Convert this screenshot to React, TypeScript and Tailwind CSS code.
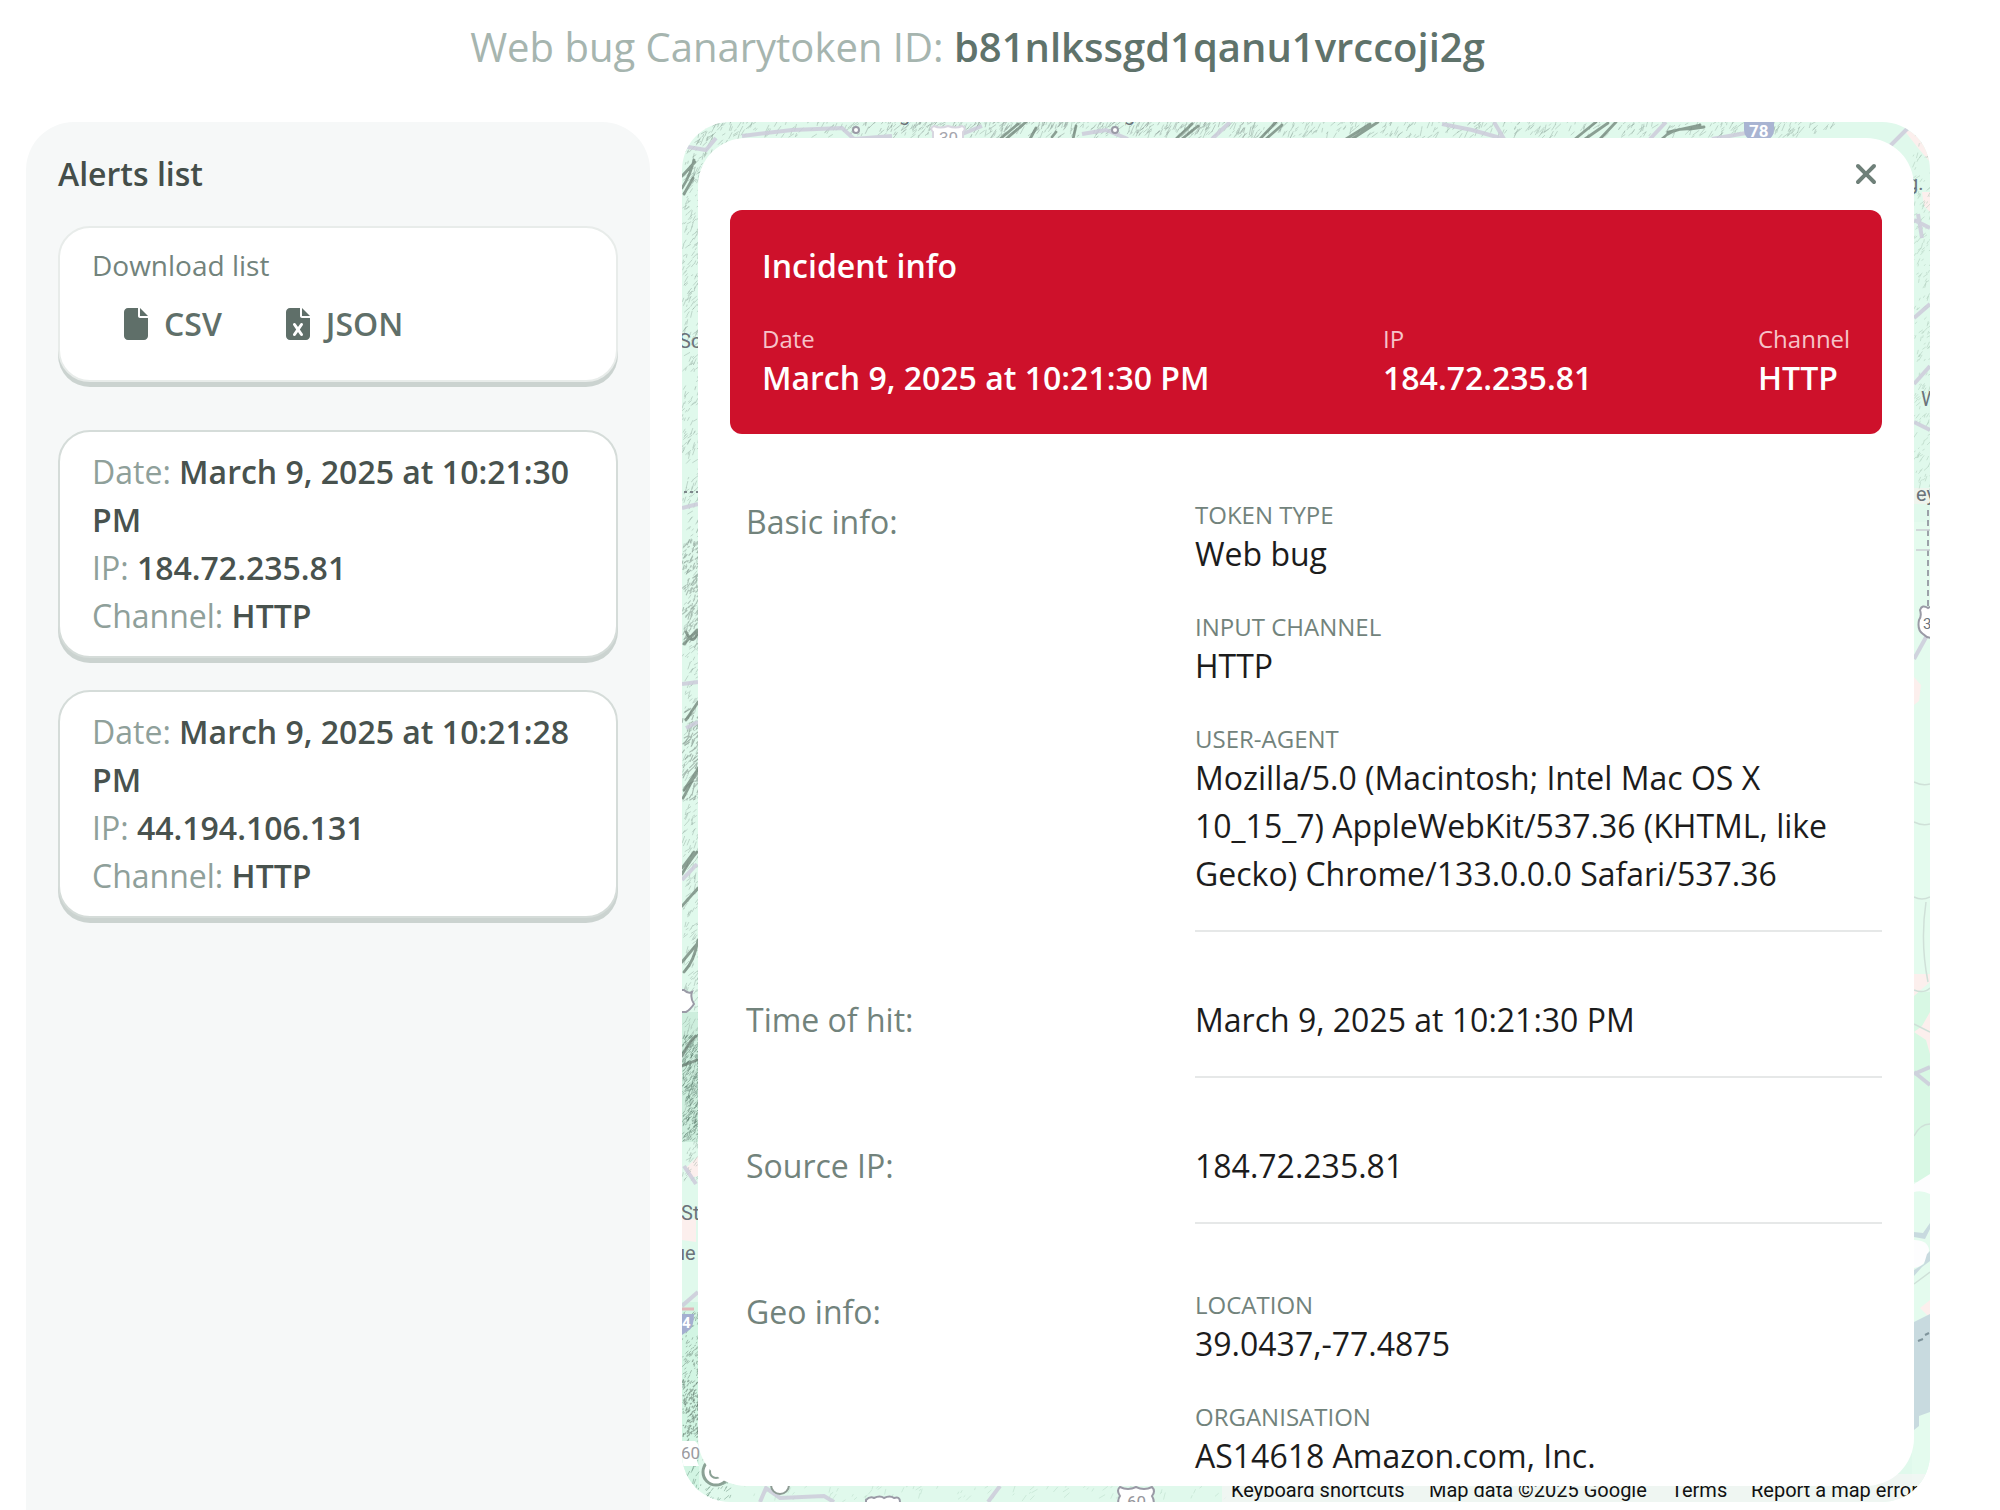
import React from 'react';
import { FaFile, FaFileExcel, FaXmark } from 'react-icons/fa6';

type Alert = { date: string; ip: string; channel: string };

const alerts: Alert[] = [
  { date: 'March 9, 2025 at 10:21:30 PM', ip: '184.72.235.81', channel: 'HTTP' },
  { date: 'March 9, 2025 at 10:21:28 PM', ip: '44.194.106.131', channel: 'HTTP' },
];

// Deterministic pseudo-random numbers keep the terrain stable between renders.
function makeRandom(seed: number) {
  let s = seed;
  return () => {
    s = (s * 1664525 + 1013904223) % 4294967296;
    return s / 4294967296;
  };
}

type Area = { x: number; y: number; w: number; h: number; n: number; color: string; len: number; width: number };

const terrain: Area[] = [
  { x: 0, y: 0, w: 1150, h: 17, n: 620, color: '#93aa9f', len: 8, width: 0.9 },
  { x: 180, y: 0, w: 420, h: 17, n: 200, color: '#8d9d98', len: 9, width: 1 },
  { x: 0, y: 0, w: 60, h: 60, n: 120, color: '#8a9f95', len: 8, width: 0.9 },
  { x: 0, y: 40, w: 17, h: 1020, n: 700, color: '#93aa9f', len: 7, width: 0.9 },
  { x: 0, y: 420, w: 17, h: 110, n: 120, color: '#768a80', len: 6, width: 1.1 },
  { x: 0, y: 590, w: 17, h: 90, n: 70, color: '#6f8078', len: 9, width: 1.1 },
  { x: 0, y: 915, w: 17, h: 105, n: 330, color: '#5f8272', len: 5, width: 1 },
  { x: 0, y: 1190, w: 17, h: 130, n: 150, color: '#6b8578', len: 4, width: 1 },
  { x: 0, y: 1260, w: 17, h: 56, n: 100, color: '#4f6659', len: 4, width: 1.2 },
  { x: 0, y: 1330, w: 60, h: 50, n: 90, color: '#6c9480', len: 6, width: 1 },
  { x: 60, y: 1362, w: 520, h: 18, n: 90, color: '#b4d8c4', len: 7, width: 0.9 },
  { x: 1230, y: 0, w: 18, h: 380, n: 200, color: '#a3c3b2', len: 6, width: 0.9 },
];

const ridges = [
  'M0 66 Q8 54 12 38', 'M2 72 L11 56', 'M0 54 L13 40',
  'M4 510 Q12 526 16 508', 'M2 522 L15 508', 'M4 598 L16 580', 'M1 676 Q10 660 16 646', 'M2 668 L14 650',
  'M0 752 Q8 738 15 730', 'M0 746 L12 730', 'M0 784 L16 766', 'M2 850 Q12 840 16 818', 'M0 840 L15 822',
  'M0 934 Q8 918 14 914', 'M0 944 L15 938',
  'M318 17 L336 2', 'M324 17 L344 0', 'M348 17 L354 6', 'M370 15 L374 10', 'M391 17 L394 4', 'M494 17 L510 2',
  'M500 17 L516 4', 'M578 17 L594 0', 'M584 17 L600 3', 'M664 17 L688 2', 'M670 17 L696 0', 'M893 17 L914 0',
  'M903 17 L926 1', 'M918 17 L934 0', 'M980 17 Q990 6 1008 7 L1022 5', 'M986 10 L1018 3',
];

const roads = [
  'M0 24 L24 28 L34 16', 'M60 14 L110 8 L160 6 L172 17 L210 14', 'M268 17 L300 4', 'M446 17 L424 8 L400 12', 'M530 17 L548 0',
  'M760 2 L790 8 L822 17 L812 0', 'M968 17 L984 0', 'M1030 17 L1070 10', 'M1208 24 L1226 6', 'M1232 98 L1248 106',
  'M1240 116 L1236 92', 'M1232 196 L1248 182', 'M1232 262 L1248 244', 'M1232 300 L1248 308', 'M0 386 L16 382',
  'M0 562 L16 560', 'M4 606 L16 600', 'M0 758 L15 742', 'M2 1044 L14 1062', 'M0 1184 L16 1170',
  'M78 1380 L84 1366 L98 1376 L142 1374 L152 1380', 'M306 1380 L318 1364', 'M436 1380 Q446 1374 460 1378',
  'M1232 537 L1248 508', 'M1232 950 L1248 963', 'M1232 952 L1248 945',
];

function MapCanvas() {
  const strokes = terrain.map((a, i) => {
    const r = makeRandom(i * 97 + 13);
    let d = '';
    for (let k = 0; k < a.n; k++) {
      const x = a.x + r() * a.w;
      const y = a.y + r() * a.h;
      const l = a.len * (0.3 + r() * 0.8);
      const t = -0.5 - r() * 0.9;
      d += `M${x.toFixed(1)} ${y.toFixed(1)}l${(Math.cos(t) * l).toFixed(1)} ${(Math.sin(t) * l).toFixed(1)}`;
    }
    return <path key={i} d={d} stroke={a.color} strokeWidth={a.width} opacity={0.5} fill="none" />;
  });

  return (
    <svg className="absolute inset-0 h-full w-full" viewBox="0 0 1248 1380" aria-hidden="true">
      <rect width="1248" height="1380" fill="#e0f9ec" />
      <rect x="1230" y="400" width="18" height="980" fill="#e4fbee" />
      <rect x="1230" y="870" width="18" height="190" fill="#d8f8e4" />
      <rect x="0" y="890" width="17" height="130" fill="#cdeedd" />
      <rect x="0" y="1180" width="17" height="200" fill="#d2f5e3" />
      <g fill="#fcefed">
        <path d="M1222 8 L1240 12 L1248 40 L1236 26Z" />
        <path d="M1240 70h8v20l-6 -6z" />
        <path d="M1232 555l7 8l-2 16l-5 4z" />
        <path d="M1232 852h16v8l-16 14z" />
        <path d="M1248 890l-8 14l-8 6l12 8l4 14z" />
        <path d="M1248 1178l-10 8l10 10z" />
        <path d="M16 1034l-12 12l4 10l8 -2z" />
        <path d="M0 1094l14 4v22l-14 -2z" />
        <path d="M1232 366h16v16h-16z" opacity=".5" />
      </g>
      {strokes}
      <path d={roads.join('')} stroke="#cdcbdb" strokeWidth="4" fill="none" opacity=".85" />
      <path d={ridges.join('')} stroke="#6e8076" strokeWidth="2.8" fill="none" opacity=".75" strokeLinecap="round" />
      <path
        d="M1232 700q8 4 16 2M1232 775q8 4 16 0M1232 868q10 4 16 -2M1244 780q-6 40 2 80M1232 902l16 8M1232 1014q6 -12 16 -12M1232 1162l16 -12M1232 660q8 4 16 2"
        stroke="#cfe0d8"
        strokeWidth="1.5"
        fill="none"
      />
      <g fill="#fdfdfe">
        <path d="M1232 1062l16 -10v20q-8 -4 -16 -2z" />
        <path d="M1232 1118q14 0 15 10q-2 16 -15 18z" />
      </g>
      <g fill="#c8dadf">
        <path d="M1232 1110l9 1l7 -10v6l-5 10l-11 -2z" />
        <path d="M1232 1148l10 -6l3 -10l3 -3v10l-8 6l-8 9z" />
        <path d="M1232 1200l16 -8v84l3 0l-3 14l-11 4v10l-5 4z" />
      </g>
      <path d="M1236 1219l5 -2M1243 1213l4 -2" stroke="#7f949c" strokeWidth="2" />
      <path d="M1246 388v96" stroke="#8b8c98" strokeWidth="2" strokeDasharray="6 4" opacity=".8" />
      <path d="M1234 408h14M1234 428h14" stroke="#c9cdd2" strokeWidth="1.5" />
      <path d="M2 370h14" stroke="#7d868a" strokeWidth="2" strokeDasharray="3 3" />
      <g fill="#fff" stroke="#9a9aa6" strokeWidth="2">
        <circle cx="174" cy="8" r="3" />
        <circle cx="433" cy="8" r="3" />
        <path d="M251 22V10q-4 -4 1 -6q6 3 14 0q8 3 14 0q5 2 1 6v12z" stroke="#d8d6e0" />
        <path d="M1250 484l-4 2q-6 -4 -8 2q2 6 -1 10q-2 10 4 14q4 4 9 4z" />
        <path d="M-4 868h6q4 4 8 2q-2 6 2 12q-4 6 -8 8h-8z" />
        <circle cx="34" cy="1350" r="13" strokeWidth="3" stroke="#8ba195" />
        <circle cx="34" cy="1350" r="6" stroke="#8ba195" />
        <circle cx="98" cy="1363" r="9" stroke="#8d9b94" />
        <path d="M184 1384v-6q4 -4 8 -2q6 -3 10 0q6 -3 10 0q6 -2 6 4v6z" />
        <path d="M437 1384q-2 -6 1 -10q-4 -6 0 -9q8 4 16 0q8 4 16 0q4 4 0 9q3 5 1 10z" />
        <path d="M-4 1319H13q6 5 3 12t1 13H-4z" stroke="none" />
      </g>
      <path d="M1062 -2h30v10q0 8 -10 12h-10q-10 -4 -10 -12z" fill="#a9b4d2" />
      <path d="M-8 1192h20q0 14 -6 17l-6 4h-8z" fill="#a4afd0" />
      <path d="M0 1187h12" stroke="#e2b8bc" strokeWidth="3" />
      <g fontFamily="Roboto, sans-serif" fontSize="20" fill="#6b737a">
        <text x="-3" y="226">Sc</text>
        <text x="-1" y="1098">St</text>
        <text x="-8" y="1138">ue</text>
        <text x="217" y="-1">g</text>
        <text x="442" y="-1">g</text>
        <text x="1225" y="68">g.</text>
        <text x="1239" y="284">W</text>
        <text x="1234" y="379">ey</text>
        <text x="1241" y="507" fontSize="15">3</text>
        <text x="-1" y="1337" fontSize="17" fill="#9b9b9f">60</text>
        <text x="257" y="22" fontSize="17" fill="#a5a5ad">30</text>
        <text x="445" y="1386" fontSize="17" fill="#96969c">60</text>
        <text x="1067" y="15" fontSize="17" fontWeight="700" fill="#fff">78</text>
        <text x="0" y="1206" fontSize="15" fontWeight="700" fill="#fff">4</text>
      </g>
    </svg>
  );
}

function AlertCard({ date, ip, channel }: Alert) {
  return (
    <li className="rounded-[32px] border-2 border-[#d5dcd9] bg-white px-8 py-4 text-[32px] leading-[48px] text-[#8fa09a] shadow-[0_5px_0_#cbd3d0]">
      <p>
        Date: <span className="font-semibold text-[#48524e]">{date}</span>
      </p>
      <p>
        IP: <span className="font-semibold text-[#48524e]">{ip}</span>
      </p>
      <p>
        Channel: <span className="font-semibold text-[#48524e]">{channel}</span>
      </p>
    </li>
  );
}

function Field({ label, children }: { label: string; children: React.ReactNode }) {
  return (
    <div>
      <p className="pt-0.5 text-[24px] leading-[30px] text-[#72837c] uppercase">{label}</p>
      <p>{children}</p>
    </div>
  );
}

function Section({ title, children }: { title: string; children: React.ReactNode }) {
  return (
    <section className="flex pl-4 pt-16 text-[32px] leading-[48px]">
      <h3 className="w-[449px] shrink-0 text-[#72837c]">{title}</h3>
      <div className="flex flex-1 flex-col gap-8 border-b-2 border-[#e6e8e8] pb-8 text-[#1c1c1c]">{children}</div>
    </section>
  );
}

function Summary({ label, value }: { label: string; value: string }) {
  return (
    <div>
      <p className="pt-0.5 text-[24px] leading-[30px] text-[#f6c3c9]">{label}</p>
      <p className="text-[32px] leading-[48px] font-semibold">{value}</p>
    </div>
  );
}

export default function App() {
  return (
    <main className="flex h-[1510px] w-[2000px] flex-col overflow-hidden bg-white font-['Open_Sans',sans-serif]">
      <h1 className="h-[122px] shrink-0 pt-[17px] pr-[45px] text-center text-[40px] leading-[60px] text-[#a6b5af]">
        Web bug Canarytoken ID: <span className="font-semibold text-[#5f736b]">b81nlkssgd1qanu1vrccoji2g</span>
      </h1>
      <div className="flex min-h-0 flex-1 items-start gap-8 pl-[26px]">
        <aside className="h-full w-[624px] rounded-t-[48px] bg-[#f6f8f8] px-8 pt-7">
          <h2 className="text-[32px] leading-[48px] font-semibold text-[#444e4a]">Alerts list</h2>
          <div className="mt-7 h-[156px] rounded-[32px] border-2 border-[#e8ecea] bg-white px-8 pt-[17px] shadow-[0_5px_0_#cbd3d0]">
            <p className="text-[28px] leading-10 text-[#72837c]">Download list</p>
            <div className="flex gap-8 pt-[15px] text-[32px] leading-[48px] font-semibold text-[#5f6f69]">
              <button className="flex items-center gap-4 pl-8">
                <FaFile className="h-8 w-6" />
                CSV
              </button>
              <button className="flex items-center gap-4 px-8">
                <FaFileExcel className="h-8 w-6" />
                JSON
              </button>
            </div>
          </div>
          <ul className="mt-12 flex flex-col gap-8">
            {alerts.map((a) => (
              <AlertCard key={a.date} {...a} />
            ))}
          </ul>
        </aside>

        <div className="relative h-[1380px] w-[1248px] overflow-hidden rounded-[48px] p-4">
          <MapCanvas />
          <div className="absolute right-0 bottom-0 flex h-7 bg-[#f5f5f5]/70 font-[Roboto,sans-serif] text-[20px] leading-8 whitespace-nowrap text-[#111]">
            <span className="w-[197px] pl-[9px]">Keyboard shortcuts</span>
            <span className="w-[245px] pl-2.5">Map data ©2025 Google</span>
            <span className="w-[78px] pl-[7px]">Terms</span>
            <span className="w-[188px] pl-[9px]">Report a map error</span>
          </div>
          <div className="relative h-[1348px] overflow-hidden rounded-[48px] bg-white px-8">
            <div className="flex h-[72px] items-center justify-end pr-1">
              <button aria-label="Close" className="-mt-[1px] text-[#6f8079]">
                <FaXmark className="h-8 w-6" />
              </button>
            </div>
            <header className="h-[224px] rounded-xl bg-[#ce112b] p-8 text-white">
              <h2 className="text-[32px] leading-[48px] font-semibold">Incident info</h2>
              <div className="grid grid-cols-[621px_375px_auto] pt-8">
                <Summary label="Date" value="March 9, 2025 at 10:21:30 PM" />
                <Summary label="IP" value="184.72.235.81" />
                <Summary label="Channel" value="HTTP" />
              </div>
            </header>
            <Section title="Basic info:">
              <Field label="Token type">Web bug</Field>
              <Field label="Input channel">HTTP</Field>
              <Field label="User-agent">
                Mozilla/5.0 (Macintosh; Intel Mac OS X 10_15_7) AppleWebKit/537.36 (KHTML, like Gecko) Chrome/133.0.0.0
                Safari/537.36
              </Field>
            </Section>
            <Section title="Time of hit:">
              <p>March 9, 2025 at 10:21:30 PM</p>
            </Section>
            <Section title="Source IP:">
              <p>184.72.235.81</p>
            </Section>
            <Section title="Geo info:">
              <Field label="Location">39.0437,-77.4875</Field>
              <Field label="Organisation">AS14618 Amazon.com, Inc.</Field>
            </Section>
          </div>
        </div>
      </div>
    </main>
  );
}
